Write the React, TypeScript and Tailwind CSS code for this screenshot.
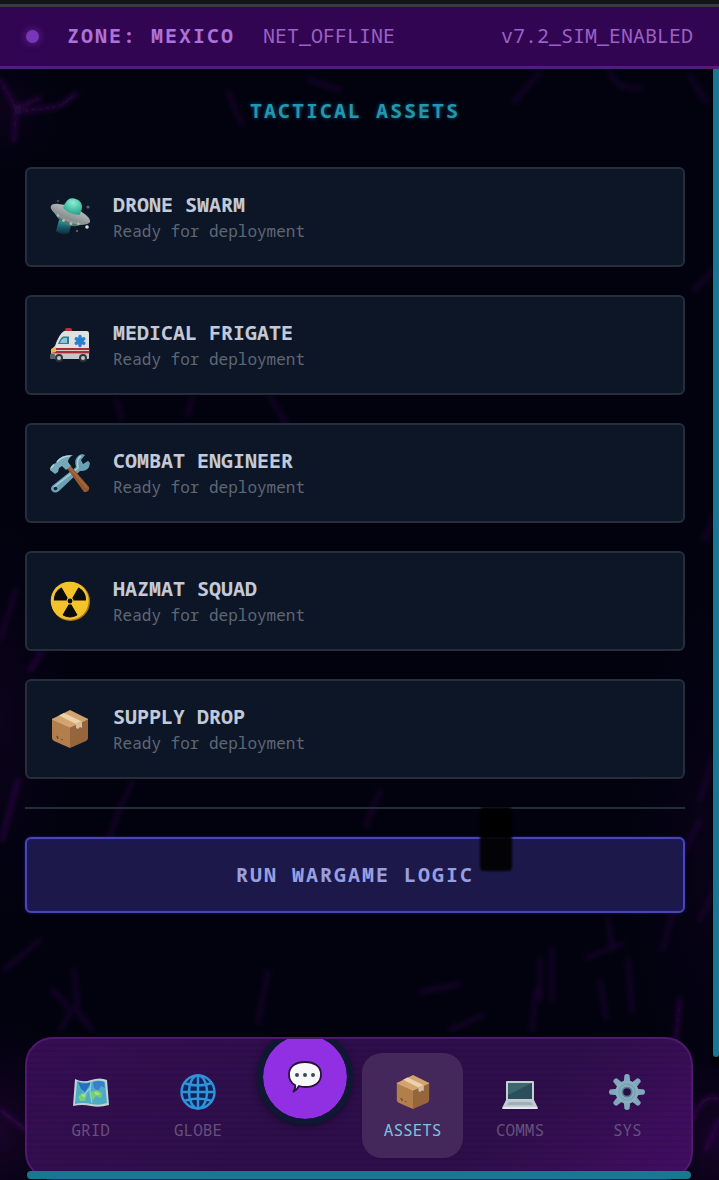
import type { ReactNode } from 'react';
import clsx from 'clsx';

function Saucer() {
  return (
    <svg viewBox="0 0 40 40" className="size-full" aria-hidden="true">
      <defs>
        <linearGradient id="beam" x1="0" y1="0" x2="0" y2="1">
          <stop offset="0" stopColor="#2aa3a8" />
          <stop offset="1" stopColor="#0c4a5c" stopOpacity="0.5" />
        </linearGradient>
        <linearGradient id="hull" x1="0" y1="0" x2="0" y2="1">
          <stop offset="0" stopColor="#b9bcbd" />
          <stop offset="1" stopColor="#7e8786" />
        </linearGradient>
        <radialGradient id="dome" cx="0.4" cy="0.3" r="0.8">
          <stop offset="0" stopColor="#8af0cf" />
          <stop offset="1" stopColor="#239d8b" />
        </radialGradient>
      </defs>
      <path d="M9 23 L22 25 L19 36 Q12 39 6 34 Z" fill="url(#beam)" />
      <g transform="rotate(22 20 18)">
        <path d="M3 18 Q8 28 21 28 Q33 28 37 18 Z" fill="#5d716e" />
        <ellipse cx="20" cy="17" rx="21" ry="7" fill="url(#hull)" />
        <path d="M0 18 Q20 27 40 18 Q37 25 20 25 Q4 25 0 18" fill="#8d9492" />
        <path d="M11 14 Q10 1 20 1 Q30 1 29 14 Q20 18 11 14" fill="url(#dome)" />
        <circle cx="9" cy="23" r="1.300" fill="#8fcab6" />
        <circle cx="16" cy="25.500" r="1.500" fill="#8fcab6" />
        <circle cx="24" cy="25.500" r="1.500" fill="#8fcab6" />
        <circle cx="31" cy="23" r="1.300" fill="#8fcab6" />
      </g>
      <circle cx="8" cy="4" r="1.300" fill="#3d4954" />
      <circle cx="38" cy="10" r="1.500" fill="#5d6672" />
      <circle cx="37" cy="30" r="1.800" fill="#d8dee0" />
      <circle cx="27" cy="34" r="1.200" fill="#52606a" />
    </svg>
  );
}

function Ambulance() {
  return (
    <svg viewBox="0 0 40 40" className="size-full" aria-hidden="true">
      <rect x="15" y="3" width="7" height="5" rx="2" fill="#c8283a" />
      <path d="M14 6 H37 Q39 6 39 9 V33 H2 Q1 31 1 27 Q1 24 5 21 Q9 9 14 6" fill="#e0e0de" />
      <path d="M8 19 Q10 13 13 11.500 H19 V19 Z" fill="#2b7f9c" />
      <path d="M10 18 Q11 14 14 13 H17 V18 Z" fill="#8fc6d2" />
      <path d="M3 23 H39.500 V28.500 H1 Q1 25 3 23" fill="#a82f3a" />
      <path d="M4 25.500 H39" stroke="#dcc9c8" strokeWidth="1" />
      <path d="M1 24 L6 22 L6 27 L1 28" fill="#f1b73b" />
      <rect x="1" y="29" width="38" height="5" rx="1" fill="#c3c9cb" />
      <rect x="0" y="29" width="5" height="5" rx="1" fill="#59636b" />
      <g stroke="#277fd0" strokeWidth="3.400" strokeLinecap="round">
        <path d="M30 11.500 V20.500 M26.200 13.800 L33.800 18.200 M26.200 18.200 L33.800 13.800" />
      </g>
      <circle cx="9" cy="33" r="4" fill="#30363a" />
      <circle cx="9" cy="33" r="2" fill="#c0c7c9" />
      <circle cx="33" cy="33" r="4" fill="#30363a" />
      <circle cx="33" cy="33" r="2" fill="#c0c7c9" />
    </svg>
  );
}

function Tools() {
  return (
    <svg viewBox="0 0 40 40" className="size-full" aria-hidden="true">
      <path
        d="M2 33 L26 14 Q23 4 32 1 L35 2 L31 7 L33 11 L38 8 L40 10 Q39 19 30 18 L9 38 Q5 41 2 38 Q0 36 2 33"
        fill="#6aa1b2"
      />
      <path d="M4 34 L28 15 Q26 6 31 3" fill="none" stroke="#a9ced7" strokeWidth="1.500" />
      <circle cx="5.500" cy="35.500" r="1.800" fill="#112331" />
      <path d="M16 14 L20 12 L39 34 Q40 38 36 39 L34 39 Z" fill="#94572f" />
      <path d="M19 14 L37 35" stroke="#a86a40" strokeWidth="1.500" />
      <path
        d="M0 15 L3 11 Q6 11 7 8 Q12 1 23 2 Q18 5 18 9 L21 13 L16 17 L12 13 L9 15 L8 19 L5 21 L0 17 Z"
        fill="#76a9b7"
      />
      <path d="M7 9 Q12 3 20 3 M1 15 L4 12" fill="none" stroke="#b3d5dc" strokeWidth="1.500" />
    </svg>
  );
}

function Hazard() {
  const blade = 'M20 22 L13 34 Q20 38 27 34 Z';
  return (
    <svg viewBox="0 0 40 40" className="size-full" aria-hidden="true">
      <circle cx="20.500" cy="20.500" r="19.500" fill="#aa7919" />
      <circle cx="19.700" cy="19.700" r="19" fill="#f4c32c" />
      <g fill="#0a0b0c" stroke="#0a0b0c" strokeWidth="1" strokeLinejoin="round">
        <path d={blade} />
        <path d={blade} transform="rotate(120 20 20)" />
        <path d={blade} transform="rotate(240 20 20)" />
      </g>
      <circle cx="20" cy="20" r="3.400" fill="#f4c32c" />
      <circle cx="20" cy="20" r="2.400" fill="#0a0b0c" />
    </svg>
  );
}

function Parcel() {
  return (
    <svg viewBox="0 0 40 40" className="size-full" aria-hidden="true">
      <path d="M2 10 L20 17 V39 L4 32 Q2 31 2 29 Z" fill="#b27e4c" />
      <path d="M38 10 L20 17 V39 L36 32 Q38 31 38 29 Z" fill="#96653b" />
      <path d="M2 10 L20 1 L38 10 L20 18 Z" fill="#d3a36f" />
      <path d="M9 6.500 L14 4 L32 12.500 L26 15 Z" fill="#ecd2a9" />
      <path d="M26 15 L32 12.500 V19 L30 18 L28 20 L26 19 Z" fill="#cfc0a7" />
      <path d="M2 10 L20 18 L38 10" fill="none" stroke="#dfb17e" strokeWidth="0.800" />
      <path d="M6 27 L8 28 V30 M11 30 L13 31" stroke="#855a32" strokeWidth="1.200" />
    </svg>
  );
}

function WorldMap() {
  return (
    <svg viewBox="0 0 36 36" className="size-full" aria-hidden="true">
      <path d="M2 5 Q10 9 18 6 Q27 3 34 6 L36 31 Q26 34 18 32 Q9 30 0 32 Z" fill="#c3d3d2" />
      <path d="M4 7 Q11 10 18 8 Q26 5 32 8 L34 29 Q26 32 18 30 Q10 28 2 30 Z" fill="#4eabc8" />
      <path d="M5 8 Q11 11 18 8 L16 12 L12 18 L8 15 Z" fill="#286ebf" />
      <path d="M20 8 Q27 6 31 8 L32 14 L28 12 L25 17 L21 14 Z" fill="#397fca" />
      <path d="M9 19 L14 20 L12 27 L7 27 L5 23 Z M17 18 L24 16 L29 19 L28 24 L23 22 L20 26 L17 23 Z" fill="#76cf76" />
      <path d="M18 8 L17 18 L19 29 M17 14 L11 21" fill="none" stroke="#8ad0da" strokeWidth="1.200" />
      <path d="M9 21 L12 22 M22 19 L26 20" stroke="#b5e08a" strokeWidth="2" />
    </svg>
  );
}

function Globe() {
  return (
    <svg viewBox="0 0 36 36" className="size-full" aria-hidden="true">
      <circle cx="18" cy="18" r="17" fill="#10245b" />
      <g fill="none" stroke="#2e93da" strokeWidth="2.400">
        <circle cx="18" cy="18" r="16.500" />
        <ellipse cx="18" cy="18" rx="9" ry="16.500" />
        <path d="M18 1 V35 M1 18 H35 M4 9 Q18 14 32 9 M4 27 Q18 22 32 27" />
      </g>
    </svg>
  );
}

function Laptop() {
  return (
    <svg viewBox="0 0 36 36" className="size-full" aria-hidden="true">
      <rect x="4" y="7" width="28" height="20" rx="1" fill="#c4cfd3" />
      <rect x="6" y="9" width="24" height="16" fill="#2b4e5a" />
      <path d="M6 9 H30 L6 21 Z" fill="#3c6770" />
      <path d="M4 26 H32 L36 34 Q36 35 35 35 H1 Q0 35 0 34 Z" fill="#bfcad2" />
      <path d="M7 28 H29 L31 31 H5 Z" fill="#9fb0bb" />
      <path d="M1 34 H35" stroke="#e2e7eb" strokeWidth="2" />
    </svg>
  );
}

function Gear() {
  return (
    <svg viewBox="0 0 36 36" className="size-full" aria-hidden="true">
      <g fill="#81a8b9">
        {[0, 45, 90, 135].map((angle) => (
          <path
            key={angle}
            d="M15.500 1 Q18 -1 20.500 1 L21.500 10 V26 L20.500 35 Q18 37 15.500 35 L14.500 26 V10 Z"
            transform={`rotate(${angle} 18 18)`}
          />
        ))}
      </g>
      <circle cx="18" cy="18" r="11.500" fill="#87afbf" />
      <circle cx="18" cy="18" r="8" fill="none" stroke="#789fb0" strokeWidth="1.500" />
      <circle cx="18" cy="18" r="5.500" fill="#597f94" />
      <circle cx="18" cy="18" r="3.800" fill="#290d43" />
    </svg>
  );
}

function Speech() {
  return (
    <svg viewBox="0 0 36 36" className="size-9" aria-hidden="true">
      <path
        d="M18 3 C27 3 34 7 34 15.500 C34 24 27 28 18 28 Q15 28 12 27 Q10 31 6 33 Q9 29 8 26 Q2 23 2 15.500 C2 7 9 3 18 3"
        fill="#f8f7fa"
        stroke="#25143b"
        strokeWidth="1.800"
      />
      <circle cx="10" cy="16" r="2" fill="#3b4850" />
      <circle cx="18" cy="16" r="2" fill="#3b4850" />
      <circle cx="26" cy="16" r="2" fill="#3b4850" />
    </svg>
  );
}

function Backdrop() {
  return (
    <svg
      viewBox="0 0 719 1180"
      preserveAspectRatio="xMidYMid slice"
      className="absolute inset-0 size-full"
      aria-hidden="true"
    >
      <defs>
        <radialGradient id="haze">
          <stop offset="0" stopColor="#3b0750" stopOpacity="0.400" />
          <stop offset="1" stopColor="#160326" stopOpacity="0" />
        </radialGradient>
        <filter id="soft">
          <feGaussianBlur stdDeviation="2.500" />
        </filter>
      </defs>
      <ellipse cx="0" cy="1130" rx="90" ry="110" fill="url(#haze)" />
      <ellipse cx="719" cy="1140" rx="90" ry="100" fill="url(#haze)" />
      <ellipse cx="0" cy="110" rx="60" ry="60" fill="url(#haze)" opacity="0.500" />
      <ellipse cx="0" cy="720" rx="70" ry="200" fill="url(#haze)" opacity="0.500" />
      <ellipse cx="719" cy="850" rx="90" ry="260" fill="url(#haze)" opacity="0.400" />
      <g fill="none" stroke="#49106b" strokeWidth="4" strokeLinecap="round" filter="url(#soft)">
        <g opacity="0.550">
          <path d="M0 80 L16 108 L14 140 M16 108 L40 98 M20 112 L60 106 L76 94" />
          <path d="M2 840 L18 780 M676 1040 L680 1000 M692 1120 Q705 1090 719 1100" />
          <path d="M30 670 L42 652 M706 1150 L719 1120 M0 1110 L26 1130" />
        </g>
        <g opacity="0.300">
          <path d="M104 852 L118 814 L132 782 M540 72 L514 102 M610 72 Q615 90 640 88" />
          <path d="M540 960 V1000 M552 950 V1000 M608 920 L612 946 M628 960 L632 1010 M532 1030 L536 990" />
          <path d="M586 958 L622 944 M420 992 L460 984 M450 1030 L482 1016 M600 980 L606 1018" />
          <path d="M52 990 L72 1010 L60 1030 M74 970 L78 1012 L92 1030 M258 1022 L268 972" />
          <path d="M116 400 L122 418 M192 398 L188 414 M270 396 L286 424 M380 790 L366 826" />
          <path d="M680 860 L700 820 M640 900 L668 850 M700 920 L719 880 M4 970 L40 940" />
          <path d="M662 950 L676 905 M690 76 L706 102 M700 800 L712 760 M0 640 L16 590" />
          <path d="M228 92 L242 124 M310 80 L340 90 M704 540 L719 510 M694 290 L719 264" />
        </g>
      </g>
    </svg>
  );
}

const assets = [
  { name: 'DRONE SWARM', icon: <Saucer /> },
  { name: 'MEDICAL FRIGATE', icon: <Ambulance /> },
  { name: 'COMBAT ENGINEER', icon: <Tools /> },
  { name: 'HAZMAT SQUAD', icon: <Hazard /> },
  { name: 'SUPPLY DROP', icon: <Parcel /> },
];

function AssetCard({ name, icon }: { name: string; icon: ReactNode }) {
  return (
    <button
      type="button"
      className="flex w-full items-center gap-[23px] rounded-md border-2 border-[#252f3c] bg-[#0d1626] px-[23px] py-[22px] text-left"
    >
      <span className="size-10 shrink-0">{icon}</span>
      <span className="flex flex-col">
        <span className="text-xl leading-7 font-bold text-[#c3c9d6]">{name}</span>
        <span className="text-base leading-6 text-[#5f6777]">Ready for deployment</span>
      </span>
    </button>
  );
}

function NavItem({ label, icon, active }: { label: string; icon: ReactNode; active?: boolean }) {
  return (
    <button
      type="button"
      aria-current={active ? 'page' : undefined}
      className={clsx(
        'flex h-[105px] flex-col items-center gap-2 rounded-[20px] pt-[21px] text-base leading-6',
        active ? 'bg-[#45285b] text-[#7cc5df]' : 'text-[#65517c]',
      )}
    >
      <span className="size-9">{icon}</span>
      <span>{label}</span>
    </button>
  );
}

export default function App() {
  return (
    <div className="relative isolate flex min-h-screen flex-col overflow-hidden bg-[#02020f] font-['Noto_Sans_Mono','DejaVu_Sans_Mono',monospace]">
      <div className="absolute inset-0 -z-10">
        <Backdrop />
      </div>

      <header className="flex items-center justify-between border-t-4 border-b-3 border-t-[#101519] border-b-[#511d78] bg-[#310552] text-xl leading-7 text-[#9c61c5] shadow-[inset_0_3px_0_#363b3d]">
        <div className="flex items-center pt-[18px] pb-4 pl-[26px]">
          <span className="size-[13px] rounded-full bg-[#7a36b8] shadow-[0_0_8px_#6b2aa5]" />
          <span className="ml-7 font-bold tracking-widest text-[#ad71d8]">ZONE: MEXICO</span>
          <span className="ml-7">NET_OFFLINE</span>
        </div>
        <span className="pt-[18px] pr-[26px] pb-4">v7.2_SIM_ENABLED</span>
      </header>

      <div className="-mb-5 flex grow">
        <main className="flex grow flex-col gap-7 pr-7 pb-20 pl-[25px]">
          <h1 className="pt-7 pb-[14px] text-center text-xl leading-7 font-bold tracking-widest text-[#2496b0] [text-shadow:0_0_4px_#0b5264]">
            TACTICAL ASSETS
          </h1>
          {assets.map((asset) => (
            <AssetCard key={asset.name} {...asset} />
          ))}
          <div className="relative z-10 h-[2px] bg-[#262c3a]">
            <span className="absolute top-0 left-[69%] h-16 w-8 rounded-sm bg-black/90 blur-[1px]" />
          </div>
          <button
            type="button"
            className="rounded-md border-2 border-[#4c47aa] bg-[#1c194a] py-[22px] text-xl leading-7 font-bold tracking-widest text-[#989fe0] shadow-[0_0_3px_#1b1783,inset_0_0_4px_#1b1783]"
          >
            RUN WARGAME LOGIC
          </button>
        </main>
        <div className="w-[6px] shrink-0 rounded-b-sm bg-[#187894] shadow-[0_8px_3px_#000]" />
      </div>

      <div className="relative mr-[26px] ml-[25px]">
        <nav className="grid grid-cols-6 gap-[6px] overflow-hidden rounded-[28px] border-2 border-[#50196f] bg-[repeating-linear-gradient(0deg,#00000012_0px,#00000012_2px,transparent_2px,transparent_6px),linear-gradient(135deg,#350d53,#2e0e4a_40%,#2e0e4a_70%,#430d64)] px-[13px] pt-[14px] pb-5">
          <NavItem label="GRID" icon={<WorldMap />} />
          <NavItem label="GLOBE" icon={<Globe />} />
          <button
            type="button"
            aria-label="Chat"
            className="-mt-6 flex size-24 items-center justify-center justify-self-center rounded-full border-[6px] border-[#0f1732] bg-[#9130e2] bg-clip-padding shadow-[0_2px_6px_#180b2c]"
          >
            <Speech />
          </button>
          <NavItem label="ASSETS" icon={<Parcel />} active />
          <NavItem label="COMMS" icon={<Laptop />} />
          <NavItem label="SYS" icon={<Gear />} />
        </nav>
        <div className="absolute inset-x-[2px] bottom-px h-2 rounded-sm bg-[#187894]" />
      </div>
    </div>
  );
}
